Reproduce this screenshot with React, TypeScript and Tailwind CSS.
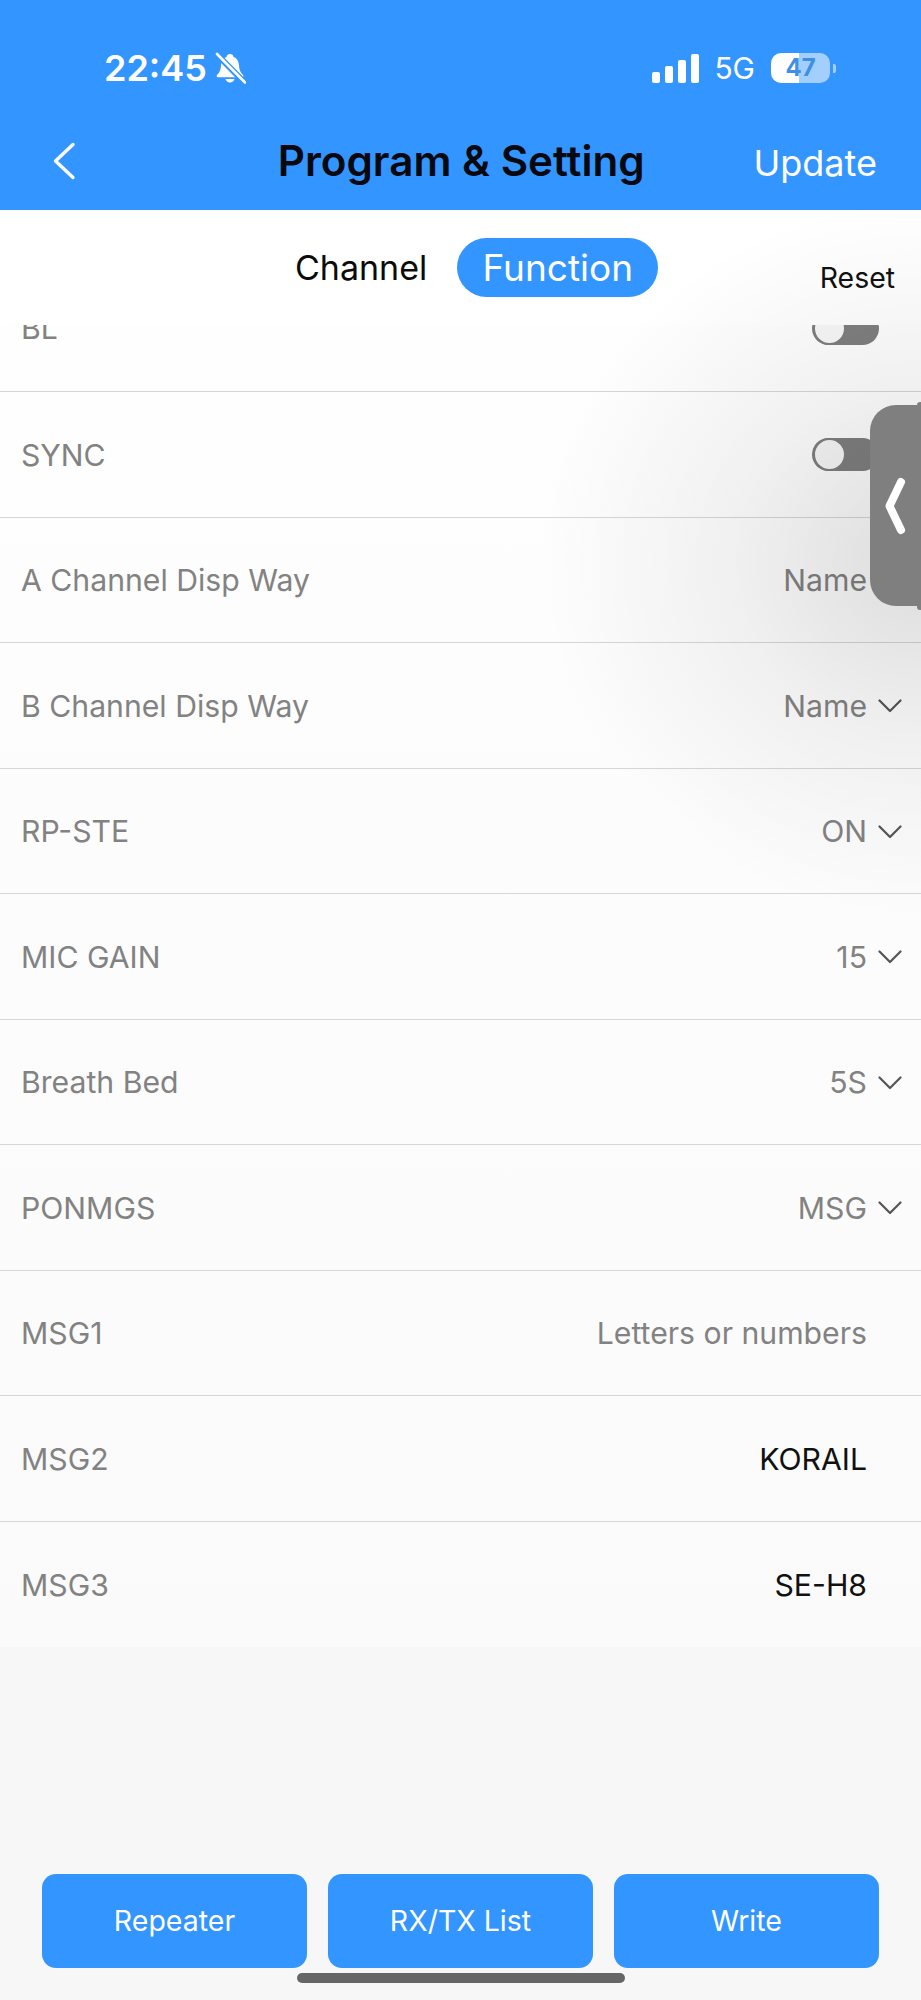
import React from "react";

const font = { fontFamily: "Inter, 'Liberation Sans', sans-serif" };

function Chevron() {
  return (
    <svg width="24" height="14" viewBox="0 0 24 14" fill="none" className="shrink-0 translate-y-[1px]">
      <path d="M1.5 1.5 L12 12 L22.5 1.5" stroke="#555" strokeWidth="2.2" strokeLinecap="round" strokeLinejoin="round" />
    </svg>
  );
}

function Toggle() {
  return (
    <div className="flex h-[33px] w-[67px] items-center rounded-full bg-[#7f7f7f] mr-[23px]">
      <div className="h-[29px] w-[29px] ml-[1px] rounded-full border-[2px] border-[#7f7f7f] bg-[#f7f7f7] box-content -my-px" />
    </div>
  );
}

type RowData = { label: string; value?: string; chevron?: boolean; dark?: boolean; toggle?: boolean };

function Row({ label, value, chevron, dark, toggle }: RowData) {
  return (
    <div className="flex h-[125.5px] shrink-0 items-center justify-between border-b border-[#d6d6d6] pl-[21px] pr-[19px] last:border-b-0">
      <span className="translate-y-[1px] text-[30.2px] text-[#828282]">{label}</span>
      {toggle ? (
        <Toggle />
      ) : (
        <div className={chevron ? "flex items-center gap-[11px]" : "flex items-center pr-[35px]"}>
          <span className={dark ? "translate-y-[1px] text-[30.2px] text-[#111]" : "translate-y-[1px] text-[30.2px] text-[#828282]"}>{value}</span>
          {chevron && <Chevron />}
        </div>
      )}
    </div>
  );
}

const rows: RowData[] = [
  { label: "SYNC", toggle: true },
  { label: "A Channel Disp Way", value: "Name", chevron: true },
  { label: "B Channel Disp Way", value: "Name", chevron: true },
  { label: "RP-STE", value: "ON", chevron: true },
  { label: "MIC GAIN", value: "15", chevron: true },
  { label: "Breath Bed", value: "5S", chevron: true },
  { label: "PONMGS", value: "MSG", chevron: true },
  { label: "MSG1", value: "Letters or numbers" },
  { label: "MSG2", value: "KORAIL", dark: true },
  { label: "MSG3", value: "SE-H8", dark: true },
];

function Signal() {
  return (
    <div className="flex h-[29px] items-end gap-[5px]">
      <div className="h-[11px] w-[8px] rounded-[2px] bg-white" />
      <div className="h-[17px] w-[8px] rounded-[2px] bg-white" />
      <div className="h-[23px] w-[8px] rounded-[2px] bg-white" />
      <div className="h-[29px] w-[8px] rounded-[2px] bg-white" />
    </div>
  );
}

function Bell() {
  return (
    <svg width="32" height="32" viewBox="0 0 32 32" className="shrink-0">
      <path
        d="M16 2c-2 0-3.2 1.3-3.5 3C8.8 6.3 7.2 9.6 7 13.5c-.2 4-1.2 6.8-4 9.5-.8.8-.4 2.2 1 2.2h24c1.4 0 1.8-1.400 1-2.200-2.800-2.700-3.800-5.500-4-9.500-.2-3.900-1.800-7.200-5.500-8.500C19.200 3.300 18 2 16 2z"
        fill="#fff"
      />
      <path d="M11.500 27h9c-.5 2.300-2.300 3.500-4.500 3.500s-4-1.200-4.500-3.500z" fill="#fff" />
      <path d="M2 1.500 L30 30" stroke="#3395ff" strokeWidth="6" />
      <path d="M3 2 L31 30.500" stroke="#fff" strokeWidth="2.600" strokeLinecap="round" />
    </svg>
  );
}

function Battery() {
  return (
    <div className="flex items-center gap-[3px]">
      <div className="flex h-[30px] w-[59px] items-center justify-center rounded-[10px] bg-[linear-gradient(90deg,#fff_47%,#a3cfff_47%)] text-[24px] font-bold leading-none text-[#3f8fe8]">
        47
      </div>
      <div className="h-[9px] w-[3px] rounded-r-[2px] bg-[#a3cfff]" />
    </div>
  );
}

function BottomButton({ children }: { children: React.ReactNode }) {
  return (
    <button className="flex h-[94px] flex-1 items-center justify-center rounded-[14px] bg-[#3395ff] pt-[1px] text-[28.5px] text-white">
      {children}
    </button>
  );
}

export default function App() {
  return (
    <div className="relative flex h-[2000px] w-[921px] flex-col overflow-hidden bg-[#f7f7f7]" style={font}>
      <header className="h-[210px] shrink-0 bg-[#3395ff] text-white">
        <div className="h-[52px]" />
        <div className="flex h-[32px] items-center justify-between pl-[104px] pr-[85px]">
          <div className="flex items-center gap-[7px]">
            <span className="text-[36px] font-semibold leading-none">22:45</span>
            <Bell />
          </div>
          <div className="flex items-center">
            <Signal />
            <span className="ml-[15px] mr-[16px] text-[30px] leading-none">5G</span>
            <Battery />
          </div>
        </div>
        <div className="flex h-[126px] items-center justify-between pl-[52px] pr-[44px] pt-[28px]">
          <svg width="24" height="38" viewBox="0 0 24 38" fill="none" className="shrink-0">
            <path d="M21 2.500 L3.500 19 L21 35.500" stroke="#fff" strokeWidth="3.400" strokeLinecap="round" strokeLinejoin="round" />
          </svg>
          <span className="ml-[93px] text-[42.2px] font-semibold text-[#08080f]">Program &amp; Setting</span>
          <span className="translate-y-[2px] text-[36px]">Update</span>
        </div>
      </header>

      <div className="flex h-[115px] shrink-0 items-start justify-between bg-white pl-[295px] pr-[26px]">
        <div className="mt-[28px] flex items-center gap-[30px]">
          <span className="text-[34px] text-[#0b0b0b]">Channel</span>
          <span className="flex h-[59px] w-[201px] items-center justify-center rounded-full bg-[#3395ff] text-[37px] text-white">
            Function
          </span>
        </div>
        <span className="mt-[47px] text-[28.4px] text-[#111]">Reset</span>
      </div>

      <div className="flex shrink-0 flex-col bg-[linear-gradient(180deg,#fefefe,#fafafa)]">
        <div className="relative h-[67px] shrink-0 overflow-hidden border-b border-[#d6d6d6]">
          <div className="absolute left-[21px] top-[-19px] text-[30.2px] text-[#828282]">BL</div>
          <div className="absolute right-[42px] top-[-13px] flex h-[33px] w-[67px] items-center rounded-full bg-[#7f7f7f]">
            <div className="ml-[1px] h-[29px] w-[29px] rounded-full border-[2px] border-[#7f7f7f] bg-[#f7f7f7] box-content -my-px" />
          </div>
        </div>
        {rows.map((r) => (
          <Row key={r.label} {...r} />
        ))}
      </div>

      <div className="pointer-events-none absolute left-0 right-0 top-[210px] h-[800px] bg-[radial-gradient(ellipse_380px_360px_at_100%_350px,rgba(0,0,0,0.13),rgba(0,0,0,0.05)_50%,rgba(0,0,0,0)_100%)]" />

      <div className="absolute right-0 top-[402px] h-[208px] w-[4px] rounded-l-[3px] bg-[#7f7f7f]" />
      <div className="absolute right-0 top-[405px] flex h-[201px] w-[51px] items-center justify-start rounded-l-[26px] bg-[#7f7f7f] pl-[14px]">
        <svg width="22" height="60" viewBox="0 0 22 60" fill="none">
          <path d="M17 6 L5.500 30 L17 54" stroke="#fff" strokeWidth="8" strokeLinecap="round" strokeLinejoin="round" />
        </svg>
      </div>

      <div className="mt-auto flex gap-[21px] px-[42px] pb-[32px]">
        <BottomButton>Repeater</BottomButton>
        <BottomButton>RX/TX List</BottomButton>
        <BottomButton>Write</BottomButton>
      </div>

      <div className="absolute bottom-[17px] left-[297px] h-[10px] w-[328px] rounded-full bg-[#666]" />
    </div>
  );
}
